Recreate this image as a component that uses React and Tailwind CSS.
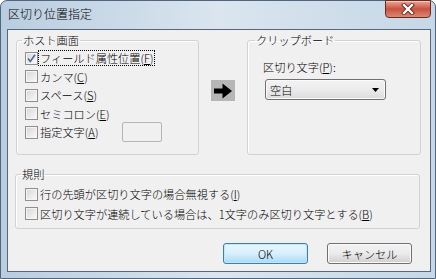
import React from "react";

const font = { fontFamily: '"Noto Sans CJK JP", "Noto Sans", sans-serif' };

function Check({ checked }) {
  return (
    <div className="w-[13px] h-[13px] shrink-0 border border-[#8f8f8f] bg-gradient-to-br from-[#d6d6d6] to-[#fbfbfb] shadow-[inset_0_0_0_1px_#f4f4f4] flex items-center justify-center">
      {checked && (
        <svg width="11" height="11" viewBox="0 0 11 11">
          <path d="M2 5.5 L4.3 8.5 L9 1.8" fill="none" stroke="#50679a" strokeWidth="1.6" />
        </svg>
      )}
    </div>
  );
}

function Option({ checked, focus, children, h = "h-[18.5px]" }) {
  return (
    <div className={`flex items-center ${h}`}>
      <Check checked={checked} />
      <span
        className={`px-[1px] leading-[14px] border border-dotted ${
          focus ? "border-black" : "border-transparent"
        }`}
      >
        {children}
      </span>
    </div>
  );
}

function Key({ k }) {
  return (
    <>
      (<span className="underline underline-offset-1">{k}</span>)
    </>
  );
}

export default function App() {
  return (
    <div className="w-[436px] h-[279px] bg-white text-[11.2px] font-light text-black" style={font}>
      <div className="w-[436px] h-[279px] rounded-t-[7px] border border-[#52667b] bg-gradient-to-r from-[#b9cde0] via-[#dae5ef] to-[#c6d7e7] flex flex-col">
        {/* title bar */}
        <div className="h-[28px] flex items-start justify-between shrink-0">
          <div className="pl-[7px] pt-[5px] text-[12px] leading-[16px] text-black">区切り位置指定</div>
          <div className="-mt-[1px] mr-[4px] w-[46px] h-[18px] rounded-b-[4px] border border-[#6a2a24] bg-gradient-to-b from-[#e9a898] via-[#c9503f] to-[#d98a72] flex items-center justify-center shadow-[inset_0_1px_0_#f3c9bd]">
            <svg width="14" height="12" viewBox="0 0 14 12">
              <path d="M3 2 L11 10 M11 2 L3 10" stroke="#5a1d16" strokeWidth="4" strokeLinecap="square" />
              <path d="M3 2 L11 10 M11 2 L3 10" stroke="#ffffff" strokeWidth="2.4" strokeLinecap="square" />
            </svg>
          </div>
        </div>

        {/* client area */}
        <div className="ml-[6px] mr-[4px] h-[243px] border border-[#59677a] bg-[#f0f0f0] flex flex-col">
          <div className="flex items-start mt-[3px] ml-[8px]">
            <fieldset className="w-[183px] h-[122px] border border-[#d2d2d2] rounded-[3px] shadow-[inset_1px_1px_0_#ffffff]">
              <legend className="ml-[5px] px-[1px] leading-[14px]">ホスト画面</legend>
              <div className="pl-[8px] mt-[2px] flex flex-col">
                <Option checked focus>
                  フィールド属性位置<Key k="F" />
                </Option>
                <Option>
                  カンマ<Key k="C" />
                </Option>
                <Option>
                  スペース<Key k="S" />
                </Option>
                <Option>
                  セミコロン<Key k="E" />
                </Option>
                <div className="flex items-center h-[18.5px]">
                  <div className="w-[97px] shrink-0">
                    <Option>
                      指定文字<Key k="A" />
                    </Option>
                  </div>
                  <div className="w-[40px] h-[20px] border border-[#b5b5b5] rounded-[2px] bg-[#f0f0f0]" />
                </div>
              </div>
            </fieldset>

            <div className="ml-[12px] mt-[47px] w-[24px] h-[21px] bg-[#b6b6b6] flex items-center justify-center">
              <svg width="20" height="16" viewBox="0 0 20 16">
                <path d="M1 5.5 H9.5 V0.5 L19 8 L9.5 15.5 V10.5 H1 Z" fill="#000000" />
              </svg>
            </div>

            <fieldset className="ml-[12px] w-[174px] h-[122px] border border-[#d2d2d2] rounded-[3px] shadow-[inset_1px_1px_0_#ffffff]">
              <legend className="ml-[7px] px-[1px] leading-[14px]">クリップボード</legend>
              <div className="pl-[15px] mt-[13px] flex flex-col">
                <div className="leading-[14px]">
                  区切り文字<Key k="P" />:
                </div>
                <div className="ml-[2px] mt-[5px] w-[121px] h-[21px] rounded-[3px] border border-[#707070] bg-gradient-to-b from-[#f3f3f3] via-[#ebebeb] to-[#dcdcdc] flex items-center justify-between pl-[4px] pr-[6px] shadow-[inset_0_0_0_1px_#fafafa]">
                  <span className="leading-[14px]">空白</span>
                  <svg width="7" height="4" viewBox="0 0 7 4">
                    <path d="M0 0 H7 L3.5 4 Z" fill="#000000" />
                  </svg>
                </div>
              </div>
            </fieldset>
          </div>

          <fieldset className="mt-[12px] ml-[7px] w-[405px] h-[62px] border border-[#d2d2d2] rounded-[3px] shadow-[inset_1px_1px_0_#ffffff]">
            <legend className="ml-[5px] px-[1px] leading-[14px]">規則</legend>
            <div className="pl-[9px] mt-[3.5px] flex flex-col">
              <Option h="h-[19.5px]">
                行の先頭が区切り文字の場合無視する<Key k="I" />
              </Option>
              <Option h="h-[19.5px]">
                区切り文字が連続している場合は、1文字のみ区切り文字とする<Key k="B" />
              </Option>
            </div>
          </fieldset>

          <div className="mt-[14px] flex justify-end pr-[18px] gap-[19px]">
            <button className="w-[85px] h-[21px] rounded-[3px] border border-[#3c7fb1] bg-gradient-to-b from-[#eaf6fd] via-[#d9f0fc] to-[#a7d9f5] shadow-[inset_0_0_0_1px_#bfe7fb] leading-[14px]">
              OK
            </button>
            <button className="w-[85px] h-[21px] rounded-[3px] border border-[#707070] bg-gradient-to-b from-[#f2f2f2] via-[#ebebeb] to-[#cfcfcf] shadow-[inset_0_0_0_1px_#fbfbfb] leading-[14px]">
              キャンセル
            </button>
          </div>
        </div>
      </div>
    </div>
  );
}
